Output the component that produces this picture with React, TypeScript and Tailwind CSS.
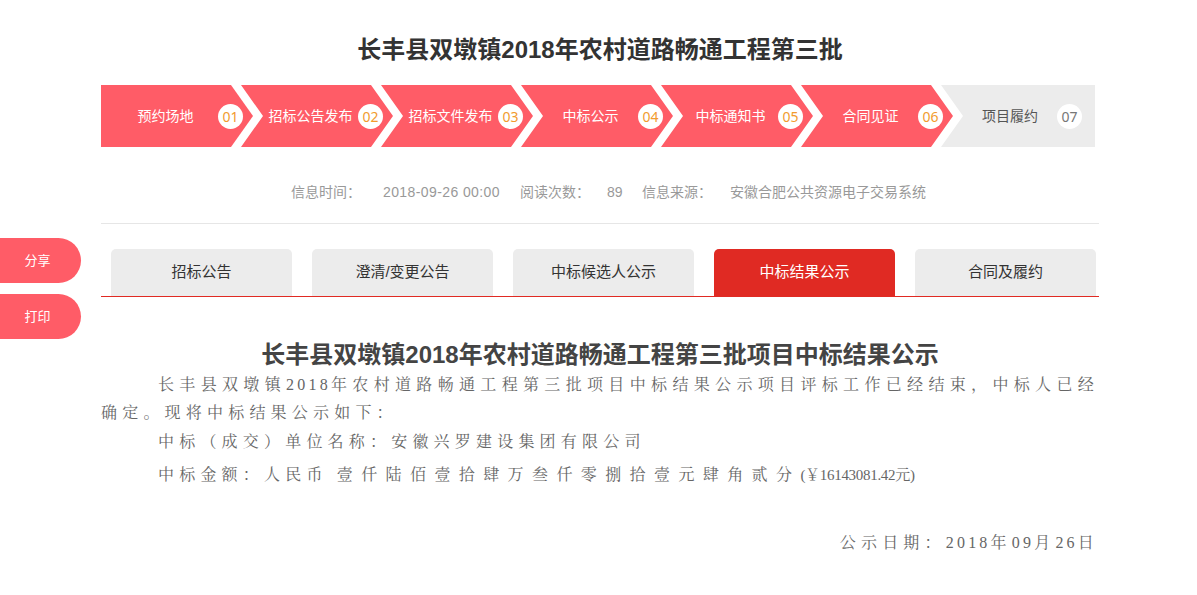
import React from "react";

const steps = [
  "预约场地",
  "招标公告发布",
  "招标文件发布",
  "中标公示",
  "中标通知书",
  "合同见证",
  "项目履约",
];

const tabs = ["招标公告", "澄清/变更公告", "中标候选人公示", "中标结果公示", "合同及履约"];

const sans = "font-['Liberation_Sans','Noto_Sans_CJK_SC',sans-serif]";
const serif =
  "font-['Liberation_Serif','Noto_Serif_CJK_SC','Noto_Sans_CJK_SC',serif]";

// digits in the article use a tighter spacing than the CJK text
function Num({ children }: { children: React.ReactNode }) {
  return <span className="tracking-[3.2px]">{children}</span>;
}

function Step({ label, index }: { label: string; index: number }) {
  const first = index === 0;
  const last = index === steps.length - 1;
  const shape = first
    ? "w-[152px] [clip-path:polygon(0_0,calc(100%_-_22px)_0,100%_50%,calc(100%_-_22px)_100%,0_100%)] pl-[12px]"
    : last
      ? "w-[154px] [clip-path:polygon(0_0,100%_0,100%_100%,0_100%,22px_50%)] -ml-[12px] pl-[22px]"
      : "w-[152px] [clip-path:polygon(0_0,calc(100%_-_22px)_0,100%_50%,calc(100%_-_22px)_100%,0_100%,22px_50%)] -ml-[12px] pl-[22px]";

  return (
    <div
      className={`shrink-0 h-[62px] flex items-center pr-[10px] ${shape} ${
        last ? "bg-[#ececec]" : "bg-[#ff5c67]"
      }`}
    >
      <span
        className={`flex-1 text-center text-[14px] whitespace-nowrap ${
          last ? "text-[#555]" : "text-white"
        }`}
      >
        {label}
      </span>
      <span
        className={`w-[25px] h-[25px] rounded-full bg-white flex items-center justify-center text-[14px] font-['Noto_Sans','Liberation_Sans',sans-serif] ${
          last ? "text-[#777] mr-[3px]" : "text-[#f29b2e]"
        }`}
      >
        {String(index + 1).padStart(2, "0")}
      </span>
    </div>
  );
}

export default function App() {
  return (
    <div className={`relative min-h-[595px] bg-white ${sans}`}>
      {/* Side buttons */}
      <div className="absolute left-0 top-[238px] flex flex-col gap-[11px]">
        <button className="w-[81px] h-[45px] rounded-r-full bg-[#ff5c67] text-white text-[13px] pr-[6px]">
          分享
        </button>
        <button className="w-[81px] h-[45px] rounded-r-full bg-[#ff5c67] text-white text-[13px] pr-[6px]">
          打印
        </button>
      </div>

      <div className="w-[998px] ml-[101px] pt-[34px]">
        <h1 className="h-[32px] leading-[32px] text-center text-[24px] font-bold text-[#333]">
          长丰县双墩镇2018年农村道路畅通工程第三批
        </h1>

        {/* Progress steps */}
        <div className="mt-[19px] w-[994px] flex">
          {steps.map((s, i) => (
            <Step key={s} label={s} index={i} />
          ))}
        </div>

        {/* Meta info */}
        <div className="mt-[35px] h-[20px] leading-[20px] flex pl-[190px] text-[14px] text-[#999] whitespace-nowrap">
          <span className="w-[92px]">信息时间：</span>
          <span className="w-[137px] tracking-[0.4px]">2018-09-26 00:00</span>
          <span className="w-[87px]">阅读次数：</span>
          <span className="w-[35px]">89</span>
          <span className="w-[88px]">信息来源：</span>
          <span>安徽合肥公共资源电子交易系统</span>
        </div>

        <div className="mt-[21px] h-px bg-[#e6e6e6]" />

        {/* Tabs */}
        <div className="mt-[25px] flex gap-[20px] pl-[10px] border-b border-[#e02a23]">
          {tabs.map((t, i) => (
            <div
              key={t}
              className={`w-[181px] h-[47px] rounded-t-[5px] flex items-center justify-center text-[15px] ${
                i === 3 ? "bg-[#e02a23] text-white" : "bg-[#ececec] text-[#333]"
              }`}
            >
              {t}
            </div>
          ))}
        </div>

        {/* Article */}
        <h2 className="mt-[42px] h-[32px] leading-[32px] text-center text-[24px] font-bold text-[#444]">
          长丰县双墩镇2018年农村道路畅通工程第三批项目中标结果公示
        </h2>

        <div className={`${serif} text-[16px] tracking-[5.2px] text-[#666] leading-[28px]`}>
          <p>
            <span className="block indent-[57px] [text-align-last:justify] text-justify">
              长丰县双墩镇<Num>2018</Num>年农村道路畅通工程第三批项目中标结果公示项目评标工作已经结束，中标人已经
            </span>
            <span className="block">确定。现将中标结果公示如下：</span>
          </p>
          <p className="mt-px pl-[57px]">中标（成交）单位名称：安徽兴罗建设集团有限公司</p>
          <p className="mt-[5px] pl-[57px] whitespace-nowrap">
            中标金额：人民币 <span className="tracking-[8.4px]">壹仟陆佰壹拾肆万叁仟零捌拾壹元肆角贰分</span>
            <span className="text-[15px] tracking-[-0.3px]">(￥16143081.42元)</span>
          </p>
          <p className="mt-[40px] text-right">
            公示日期：<Num>2018</Num>年<Num>09</Num>月<Num>26</Num>日
          </p>
        </div>
      </div>
    </div>
  );
}
